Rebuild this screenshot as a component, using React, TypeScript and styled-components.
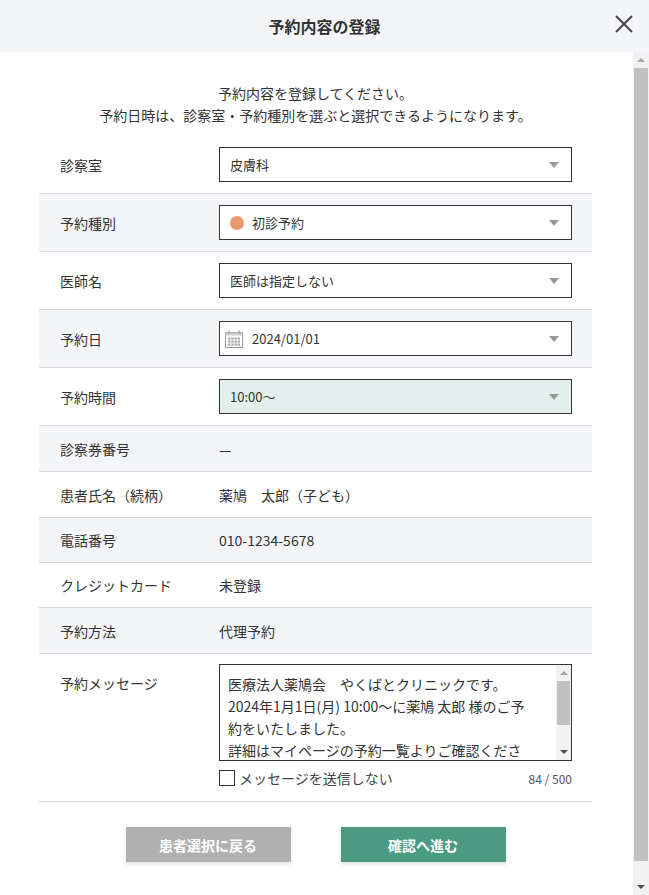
import React from "react";
import styled, { createGlobalStyle } from "styled-components";

const G = createGlobalStyle`
  html,body{margin:0;padding:0;background:#fff;}
  body{font-family:"Noto Sans CJK JP","Noto Sans",sans-serif;color:#333;}
`;
const Page = styled.div`width:649px;height:895px;display:flex;flex-direction:column;overflow:hidden;`;
const Header = styled.div`height:52px;flex:none;background:#f4f5f9;display:flex;align-items:center;justify-content:center;position:relative;
  font-size:16px;font-weight:700;color:#333;`;
const Close = styled.div`position:absolute;right:14px;top:13px;width:22px;height:22px;`;
const Body = styled.div`flex:1;display:flex;min-height:0;`;
const Content = styled.div`flex:1;padding:30px 41px 0 39px;display:flex;flex-direction:column;`;
const Intro = styled.div`text-align:center;font-size:14px;line-height:22px;color:#333;margin-bottom:10px;padding-left:0;`;
const Row = styled.div<{ $alt?: boolean; $h: number; $top?: boolean }>`
  display:flex;align-items:${p => (p.$top ? "flex-start" : "center")};height:${p => p.$h}px;box-sizing:border-box;
  background:${p => (p.$alt ? "#f4f5f9" : "#fff")};border-bottom:1px solid #d8d8dc;font-size:14px;
`;
const Label = styled.div<{ $top?: boolean }>`width:180px;padding-left:21px;box-sizing:border-box;color:#333;${p => p.$top ? "padding-top:19px;" : ""}`;
const Value = styled.div`flex:1;color:#333;`;
const Select = styled.div<{ $green?: boolean }>`width:353px;height:35px;box-sizing:border-box;border:1px solid #333;
  background:${p => (p.$green ? "#e3efec" : "#fff")};display:flex;align-items:center;padding:0 12px 0 10px;gap:8px;font-size:13px;color:#333;`;
const SelText = styled.span`flex:1;`;
const Caret = styled.span`width:0;height:0;border-left:5px solid transparent;border-right:5px solid transparent;border-top:6px solid #999;`;
const Dot = styled.span`width:14px;height:14px;border-radius:50%;background:#e89a6f;`;
const MsgCol = styled.div`flex:1;padding-top:10px;`;
const TextBox = styled.div`width:353px;height:97px;box-sizing:border-box;border:1px solid #333;display:flex;overflow:hidden;`;
const TextInner = styled.div`flex:1;padding:8px 0 0 8px;font-size:14px;line-height:22px;color:#333;overflow:hidden;white-space:nowrap;`;
const MiniBar = styled.div`width:15px;background:#f1f1f1;display:flex;flex-direction:column;align-items:center;`;
const Arrow = styled.span<{ $up?: boolean }>`width:0;height:0;margin:6px 0;border-left:4px solid transparent;border-right:4px solid transparent;
  ${p => (p.$up ? "border-bottom:4px solid #a3a3a3;" : "border-top:4px solid #505050;")}`;
const Thumb = styled.div<{ $h: number; $w: number }>`width:${p => p.$w}px;height:${p => p.$h}px;background:#c1c1c1;`;
const Spacer = styled.div`flex:1;`;
const CheckRow = styled.div`display:flex;align-items:center;margin-top:7px;width:353px;font-size:14px;color:#444;`;
const Box = styled.span`width:14px;height:14px;border:1px solid #333;margin-right:4px;`;
const Count = styled.span`margin-left:auto;font-size:12px;color:#555;`;
const Buttons = styled.div`display:flex;justify-content:center;gap:50px;margin-top:25px;padding-right:0;`;
const Btn = styled.div<{ $c: string }>`width:165px;height:35px;background:${p => p.$c};color:#fff;font-weight:700;font-size:14px;
  display:flex;align-items:center;justify-content:center;box-shadow:0 2px 4px rgba(0,0,0,.12);`;
const ScrollBar = styled.div`width:16px;background:#f1f1f1;display:flex;flex-direction:column;align-items:center;`;

const Cal = () => (
  <svg width="20" height="20" viewBox="0 0 20 20">
    <rect x="1.5" y="3.5" width="17" height="15" fill="#fff" stroke="#999" />
    <rect x="1.5" y="3.5" width="17" height="3" fill="#ccc" />
    <line x1="5" y1="1" x2="5" y2="5" stroke="#999" /><line x1="15" y1="1" x2="15" y2="5" stroke="#999" />
    {[0, 1, 2].map(r => [0, 1, 2, 3].map(c => <rect key={r + "-" + c} x={4 + c * 3.2} y={8.5 + r * 3} width="2.4" height="2.2" fill="#aaa" />))}
  </svg>
);

export default function App() {
  return (
    <Page>
      <G />
      <Header>
        予約内容の登録
        <Close><svg width="22" height="22" viewBox="0 0 22 22"><path d="M3 3L19 19M19 3L3 19" stroke="#444" strokeWidth="2" /></svg></Close>
      </Header>
      <Body>
        <Content>
          <Intro>予約内容を登録してください。<br />予約日時は、診察室・予約種別を選ぶと選択できるようになります。</Intro>
          <Row $h={58}><Label>診察室</Label><Select><SelText>皮膚科</SelText><Caret /></Select></Row>
          <Row $h={58} $alt><Label>予約種別</Label><Select><Dot /><SelText>初診予約</SelText><Caret /></Select></Row>
          <Row $h={58}><Label>医師名</Label><Select><SelText>医師は指定しない</SelText><Caret /></Select></Row>
          <Row $h={58} $alt><Label>予約日</Label><Select style={{ paddingLeft: 4 }}><Cal /><SelText>2024/01/01</SelText><Caret /></Select></Row>
          <Row $h={58}><Label>予約時間</Label><Select $green><SelText>10:00〜</SelText><Caret /></Select></Row>
          <Row $h={46} $alt><Label>診察券番号</Label><Value>—</Value></Row>
          <Row $h={46}><Label>患者氏名（続柄）</Label><Value>薬鳩　太郎（子ども）</Value></Row>
          <Row $h={45} $alt><Label>電話番号</Label><Value>010-1234-5678</Value></Row>
          <Row $h={45}><Label>クレジットカード</Label><Value>未登録</Value></Row>
          <Row $h={46} $alt><Label>予約方法</Label><Value>代理予約</Value></Row>
          <Row $h={148} $top>
            <Label $top>予約メッセージ</Label>
            <MsgCol>
              <TextBox>
                <TextInner>
                  医療法人薬鳩会　やくばとクリニックです。<br />
                  2024年1月1日(月) 10:00〜に薬鳩 太郎 様のご予<br />
                  約をいたしました。<br />
                  詳細はマイページの予約一覧よりご確認くださ
                </TextInner>
                <MiniBar><Arrow $up /><Thumb $w={13} $h={44} /><Spacer /><Arrow /></MiniBar>
              </TextBox>
              <CheckRow><Box />メッセージを送信しない<Count>84 / 500</Count></CheckRow>
            </MsgCol>
          </Row>
          <Buttons>
            <Btn $c="#b0b0b0">患者選択に戻る</Btn>
            <Btn $c="#4a9b82">確認へ進む</Btn>
          </Buttons>
        </Content>
        <ScrollBar><Arrow $up /><Thumb $w={14} $h={793} /><Spacer /><Arrow /></ScrollBar>
      </Body>
    </Page>
  );
}
